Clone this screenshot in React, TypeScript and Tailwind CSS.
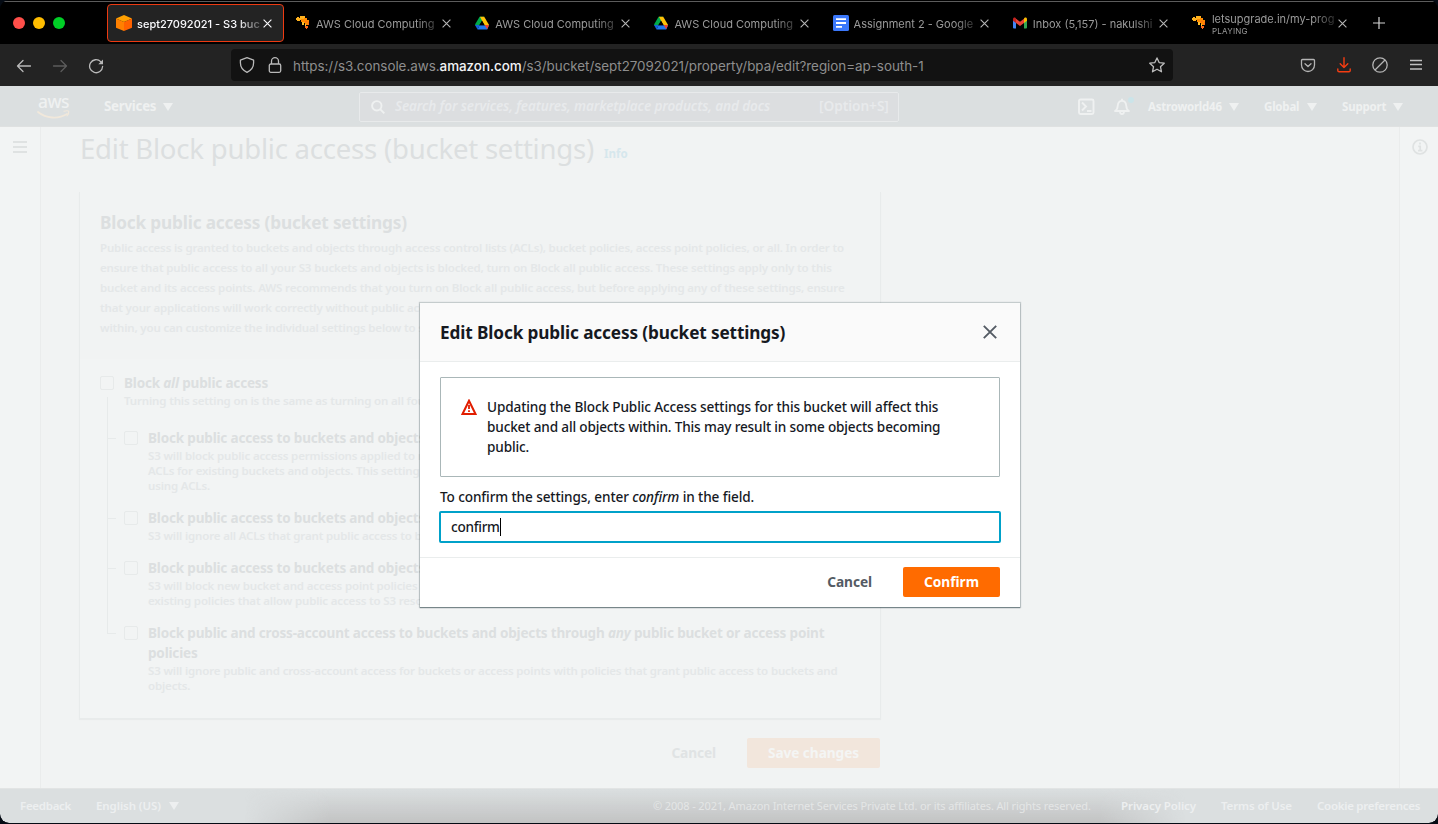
import type { ReactNode } from 'react';

const GiraffeIcon = () => (
  <svg width="16" height="16" viewBox="0 0 16 16" shapeRendering="crispEdges">
    <path fill="#ffb21e" d="M5 1h5v2H5zM1 3h9v2H1zM2 2h2v1H2zM2 5h3v1H2z" />
    <path fill="#ff8a00" d="M6 4h6v3H6zM9 3h3v2H9zM8 6h6v2H8zM12 5h2v4h-2zM10 8h3v2h-3z" />
    <path fill="#ffc02e" d="M7 7h2v3H7zM10 9h1v4h-1z" />
    <path fill="#ff6a1a" d="M13 7h1v3h-1zM10 11h3v2h-3zM10 6h2v1h-2zM11 13h1v1h-1z" />
  </svg>
);

const DriveIcon = () => (
  <svg width="16" height="16" viewBox="0 0 16 16">
    <path fill="#00a94b" d="M5.6 1.7h4.7L8.1 5.6 3.6 13 1 9.6z" />
    <path fill="#ffc107" d="M5.9 1.7h4.3l4.9 8.3h-4.6z" />
    <path fill="#1f78f0" d="M3.5 14.4l2-4.2h9.6l-1.9 4.2z" />
    <path fill="#1561d8" d="M1 10.1h4.6l-2.1 4.3z" />
    <path fill="#ea4335" d="M10.6 10.1h4.5l-1.9 4.2z" />
    <path fill="#000" d="M8 5.9l2.5 4.3h-5z" />
  </svg>
);

const DocsIcon = () => (
  <svg width="16" height="16" viewBox="0 0 16 16">
    <rect width="16" height="16" rx="1.5" fill="#3b78fb" />
    <path stroke="#fff" strokeWidth="1.8" d="M3 4.2h10M3 8h10M3 11.9h6" />
  </svg>
);

const GmailIcon = () => (
  <svg width="16" height="16" viewBox="0 0 16 16">
    <path fill="#4285f4" d="M1 5l3 2v6.5H2a1 1 0 0 1-1-1z" />
    <path fill="#34a853" d="M12 7l3-2v7.5a1 1 0 0 1-1 1h-2z" />
    <path fill="#ea4335" d="M4 3.7l4 3.1 4-3.1v4.2L8 11 4 7.9z" />
    <path fill="#c5221f" d="M1 4.2c0-1.6 1.6-2 2.6-1.2L4 3.4v4.5L1 5.7z" />
    <path fill="#fbbc04" d="M15 4.2c0-1.6-1.6-2-2.6-1.2L12 3.4v4.5l3-2.2z" />
  </svg>
);

const BucketIcon = () => (
  <svg width="16" height="16" viewBox="0 0 16 16">
    <path fill="#ffa000" d="M8 0l8 3.5-8 3.5-8-3.5z" />
    <path fill="#ff8000" d="M0 3.5L8 7v9l-8-3.2z" />
    <path fill="#ff6200" d="M16 3.5L8 7v9l8-3.2z" />
  </svg>
);

const CloseX = ({ className }: { className: string }) => (
  <svg className={className} width="9" height="9" viewBox="0 0 9 9" fill="none" stroke="currentColor" strokeWidth="1.1">
    <path d="M.6.6l7.8 7.8M8.4.6L.6 8.4" />
  </svg>
);

const tabs: { icon: ReactNode; title: string; note?: string }[] = [
  { icon: <GiraffeIcon />, title: 'AWS Cloud Computing' },
  { icon: <DriveIcon />, title: 'AWS Cloud Computing' },
  { icon: <DriveIcon />, title: 'AWS Cloud Computing' },
  { icon: <DocsIcon />, title: 'Assignment 2 - Google' },
  { icon: <GmailIcon />, title: 'Inbox (5,157) - nakulshi' },
  { icon: <GiraffeIcon />, title: 'letsupgrade.in/my-prog', note: 'PLAYING' },
];

const fade = '[mask-image:linear-gradient(to_right,black_82%,transparent_106%)]';

function TabStrip() {
  return (
    <div className="flex h-[42px] shrink-0 items-center bg-black font-['Inter',sans-serif] text-[11px]">
      <div className="flex w-[107px] shrink-0 gap-2 pl-[13px]">
        <i className="size-3 rounded-full bg-[#ff4f4a]" />
        <i className="size-3 rounded-full bg-[#ffbd00]" />
        <i className="size-3 rounded-full bg-[#00cf26]" />
      </div>
      <div className="mr-[4px] flex h-[38px] w-[177px] shrink-0 items-center rounded-[4px] border border-[#ee3a11] bg-[#232323] pl-2 text-[#fbfbfe]">
        <BucketIcon />
        <span className={`ml-[5px] w-[123px] overflow-hidden pt-[2px] whitespace-nowrap font-medium ${fade}`}>sept27092021 - S3 buc</span>
        <CloseX className="ml-[3px] shrink-0" />
      </div>
      {tabs.map((t, i) => (
        <div key={i} className="flex w-[179.2px] shrink-0 items-center pl-[7px] text-[#9a9a9a]">
          <span className="shrink-0">{t.icon}</span>
          <span className={`ml-[5px] flex w-[123px] shrink-0 flex-col overflow-hidden pt-[2px] whitespace-nowrap ${fade}`}>
            <span className={t.note ? 'leading-[13px]' : ''}>{t.title}</span>
            {t.note && <span className="text-[8px] leading-[10px] tracking-[0.25px]">{t.note}</span>}
          </span>
          <CloseX className="ml-[3px] shrink-0 text-[#b5b5b5]" />
        </div>
      ))}
      <svg className="ml-[10px]" width="12" height="12" viewBox="0 0 12 12" stroke="#d4d4d4" strokeWidth="1.2"><path d="M6 0v12M0 6h12" /></svg>
    </div>
  );
}

function Toolbar() {
  return (
    <div className="flex h-[42px] shrink-0 items-center bg-[#232323]">
      <svg className="ml-[16px] mt-px" width="16" height="16" viewBox="0 0 16 16" fill="none" stroke="#b9b9b9" strokeWidth="1.3" strokeLinecap="round" strokeLinejoin="round"><path d="M1.5 8h13M7 2.5L1.5 8 7 13.5" /></svg>
      <svg className="ml-[20px] mt-px" width="16" height="16" viewBox="0 0 16 16" fill="none" stroke="#5c5c5c" strokeWidth="1.3" strokeLinecap="round" strokeLinejoin="round"><path d="M1.5 8h13M9 2.5L14.5 8 9 13.5" /></svg>
      <svg className="ml-[20px] mt-px" width="16" height="16" viewBox="0 0 16 16" fill="none" stroke="#b9b9b9" strokeWidth="1.3" strokeLinecap="round"><path d="M14.6 8.5A6.5 6.5 0 1 1 12.7 3.6" /><path d="M15 1.5v4.7h-4.7z" fill="#b9b9b9" stroke="none" /></svg>
      <div className="ml-[127px] flex h-8 w-[942px] shrink-0 items-center rounded-[4px] bg-[#121212]">
        <svg className="ml-[8px]" width="16" height="16" viewBox="0 0 16 16" fill="none" stroke="#b9b9b9" strokeWidth="1.3" strokeLinejoin="round"><path d="M8 .7l6.600 2.500v2.600c0 4.500-2.600 7.700-6.600 9.500C4 13.500 1.400 10.300 1.400 5.800V3.200z" /></svg>
        <svg className="ml-[12px]" width="16" height="16" viewBox="0 0 16 16" fill="none" stroke="#b9b9b9" strokeWidth="1.3"><rect x="2.3" y="7" width="11.4" height="8.300" rx="1.5" /><path d="M4.500 7V4.200a3.500 3.500 0 0 1 7 0V7" /></svg>
        <div className="ml-[10px] flex-1 pt-[2px] whitespace-nowrap font-['Inter',sans-serif] text-[13.4px] tracking-[-0.02px] text-[#8e8e8e]">
          https://s3.console.aws.<span className="font-medium text-[#f3f3f5]">amazon.com</span>/s3/bucket/sept27092021/property/bpa/edit?region=ap-south-1
        </div>
        <svg className="mr-[8px]" width="16" height="16" viewBox="0 0 16 16" fill="none" stroke="#bdbdbd" strokeWidth="1.3" strokeLinejoin="round"><path d="M8 .9l2.150 4.700 5.100.6-3.800 3.450 1.050 5.150L8 12.200l-4.500 2.600 1.050-5.150L.75 6.200l5.100-.6z" /></svg>
      </div>
      <svg className="ml-[127px]" width="16" height="16" viewBox="0 0 16 16" fill="none" stroke="#b4b4b4" strokeWidth="1.3" strokeLinecap="round" strokeLinejoin="round"><path d="M2.500 2.500h11a1 1 0 0 1 1 1V8a6.500 6.500 0 0 1-13 0V3.500a1 1 0 0 1 1-1z" /><path d="M5 6.700l3 2.800 3-2.800" /></svg>
      <svg className="ml-[20px]" width="16" height="16" viewBox="0 0 16 16" fill="none" stroke="#f53d12" strokeWidth="1.4" strokeLinecap="round" strokeLinejoin="round"><path d="M8 .8v9.700M4.200 6.800L8 10.600l3.800-3.800M1.800 12v1.500a1.300 1.300 0 0 0 1.300 1.300h9.800a1.300 1.300 0 0 0 1.300-1.300V12" /></svg>
      <svg className="ml-[20px]" width="16" height="16" viewBox="0 0 16 16" fill="none" stroke="#b4b4b4" strokeWidth="1.3"><circle cx="8" cy="8" r="7.200" /><path d="M3 13L13 3" /></svg>
      <svg className="ml-[20px]" width="16" height="16" viewBox="0 0 16 16" stroke="#c0c0c0" strokeWidth="1.3"><path d="M2 3.500h12M2 7.500h12M2 12h12" /></svg>
    </div>
  );
}

const Caret = ({ className = '' }: { className?: string }) => (
  <svg className={`shrink-0 ${className}`} width="10" height="8" viewBox="0 0 10 8" fill="currentColor"><path d="M0 0h10L5 8z" /></svg>
);

function ConsoleNav() {
  return (
    <div className="flex h-[41px] shrink-0 items-center border-b border-[#dfe1e1] bg-[#dbdfe0] pt-px font-bold text-[#eff1f1]">
      <div className="ml-[37px] flex w-[33px] flex-col items-center">
        <span className="text-[17.500px] leading-[14px] font-medium tracking-[-0.5px]">aws</span>
        <svg className="mt-[2px]" width="33" height="10" viewBox="0 0 33 10" fill="none" stroke="#f1e8db" strokeWidth="1.8" strokeLinecap="round">
          <path d="M1 2c8 6.500 20 7.500 29 2" /><path d="M27 1.200c2-.7 4.500-.6 4.700.2.200 1-.5 3.200-1.700 4.500" strokeWidth="1.2" />
        </svg>
      </div>
      <span className="ml-[34px] w-[58px] text-[13.3px] tracking-[-0.25px]">Services</span>
      <Caret className="ml-px" />
      <div className="ml-[186px] flex h-[30px] w-[540px] shrink-0 items-center rounded-[2px] border border-[#e8eaeb] bg-[#dcdee0]">
        <svg className="ml-[11px]" width="14" height="14" viewBox="0 0 14 14" fill="none" stroke="currentColor" strokeWidth="1.9"><circle cx="5.8" cy="5.8" r="4.7" /><path d="M9.300 9.300l4 4" /></svg>
        <span className="ml-[10px] w-[424px] whitespace-nowrap text-[13.5px] font-semibold tracking-[-0.11px] text-[#e8eaec] italic">Search for services, features, marketplace products, and docs</span>
        <span className="text-[13.7px] font-semibold tracking-[-0.05px] text-[#e8eaec]">[Option+S]</span>
      </div>
      <svg className="ml-[178px]" width="18" height="18" viewBox="0 0 18 18" fill="none" stroke="currentColor" strokeWidth="1.9"><rect x="2" y="1.500" width="14.500" height="14.500" rx="1.500" /><path d="M5 4.500l4 4-4 4M10 13h4.500" /></svg>
      <span className="relative ml-[18px] h-[18px] w-[18px]">
        <svg width="18" height="18" viewBox="0 0 18 18" fill="none" stroke="currentColor" strokeWidth="1.800" strokeLinejoin="round"><path d="M2 13c2-1 2.600-3 2.800-5.500C5 4.800 6.500 2.800 9 2.800s4 2 4.200 4.700C13.400 10 14 12 16 13zM9 .8v2M7 13.500c0 3.300 4 3.300 4 0" /></svg>
        <i className="absolute top-[-1px] left-[15px] size-[6px] rounded-full bg-[#cbe4e9]" />
      </span>
      <span className="ml-[17px] w-[81px] text-[11.5px] tracking-[-0.24px]">Astroworld46</span><Caret />
      <span className="ml-[25px] w-[43px] text-[11.5px] tracking-[-0.2px]">Global</span><Caret />
      <span className="ml-[25px] w-[51px] text-[11.5px] tracking-[-0.2px]">Support</span><Caret />
    </div>
  );
}

const Box = () => <i className="mt-[3px] mr-[10px] size-[14px] shrink-0 rounded-[2px] border border-[#e7eaea]" />;

const settings: { title: ReactNode; lines: string[] }[] = [
  {
    title: <>Block public access to buckets and objects granted through <em>new</em> access control lists (ACLs)</>,
    lines: [
      'S3 will block public access permissions applied to newly added buckets or objects, and prevent the creation of new public access',
      'ACLs for existing buckets and objects. This setting doesn’t change any existing permissions that allow public access to S3',
      'using ACLs.',
    ],
  },
  {
    title: <>Block public access to buckets and objects granted through <em>any</em> access control lists (ACLs)</>,
    lines: ['S3 will ignore all ACLs that grant public access to buckets and objects.'],
  },
  {
    title: <>Block public access to buckets and objects granted through <em>new</em> public bucket policies</>,
    lines: [
      'S3 will block new bucket and access point policies that grant public access to buckets and objects. This doesn’t change any',
      'existing policies that allow public access to S3 resources.',
    ],
  },
  {
    title: <>Block public and cross-account access to buckets and objects through <em>any</em> public bucket or access point<br />policies</>,
    lines: [
      'S3 will ignore public and cross-account access for buckets or access points with policies that grant public access to buckets and',
      'objects.',
    ],
  },
];

const boldLine = 'text-[13.5px] leading-5 font-bold tracking-[-0.165px] text-[#dcdfe0]';
const smallLine = 'text-[11.5px] leading-[15px] font-semibold tracking-[-0.16px] text-[#e4e7e8]';

function SettingsPage() {
  return (
    <div className="flex flex-1 bg-[#f1f3f3] text-[#dcdfe0]">
      <div className="w-[41px] shrink-0 border-r border-[#eaecec] bg-[#f2f4f4]">
        <svg className="mt-[13px] ml-[13px]" width="14" height="14" viewBox="0 0 14 14" stroke="#dfe2e2" strokeWidth="1.8"><path d="M0 2h14M0 7h14M0 12h14" /></svg>
      </div>
      <div className="flex-1 pl-[38px]">
        <div className="flex h-[65px] items-start pl-px whitespace-nowrap">
          <h1 className="mt-[4px] w-[524px] text-[27.500px] leading-9 tracking-[-0.21px]">Edit Block public access (bucket settings)</h1>
          <span className="mt-[19px] text-[11.5px] leading-4 font-bold text-[#d6e7ed]">Info</span>
        </div>
        <section className="w-[802px] border border-t-0 border-[#e8ebeb] bg-[#f2f4f4] whitespace-nowrap shadow-[0_1px_1px_#e9ebeb]">
          <header className="h-[167px] bg-[#f1f3f3] pt-[17px] pl-[20px]">
            <h2 className="mb-px text-[17.2px] leading-7 font-bold tracking-[-0.16px]">Block public access (bucket settings)</h2>
            <div className="text-[11.5px] leading-5 font-semibold tracking-[-0.16px] text-[#e4e7e8]">
              <p>Public access is granted to buckets and objects through access control lists (ACLs), bucket policies, access point policies, or all. In order to</p>
              <p className="tracking-[-0.14px]">ensure that public access to all your S3 buckets and objects is blocked, turn on Block all public access. These settings apply only to this</p>
              <p>bucket and its access points. AWS recommends that you turn on Block all public access, but before applying any of these settings, ensure</p>
              <p>that your applications will work correctly without public access. If you require some level of public access to your buckets or objects</p>
              <p>within, you can customize the individual settings below to suit your specific storage use cases. Learn more</p>
            </div>
          </header>
          <div className="relative h-[359px] pt-[14px] pl-[20px]">
            <i className="absolute top-[38px] left-[27px] h-[236px] w-px bg-[#e7eaea]" />
            <div className="mb-5 flex">
              <Box />
              <div>
                <div className={boldLine}>Block <em>all</em> public access</div>
                <div className={smallLine}>Turning this setting on is the same as turning on all four settings below. Each of the following settings are independent of one another.</div>
              </div>
            </div>
            {settings.map((s, i) => (
              <div key={i} className="mb-[15px] flex pl-[7px]">
                <i className="mt-[10px] mr-[8px] h-px w-[9px] bg-[#e7eaea]" />
                <Box />
                <div>
                  <div className={boldLine}>{s.title}</div>
                  {s.lines.map((l) => <div key={l} className={smallLine}>{l}</div>)}
                </div>
              </div>
            ))}
          </div>
        </section>
        <div className="mt-[19px] flex h-[30px] w-[801px] items-center justify-end text-[13.7px] font-bold text-[#e0e3e4]">
          <span className="mr-[31px] tracking-[-0.1px]">Cancel</span>
          <span className="flex h-full w-[133px] items-center justify-center rounded-[2px] bg-[#f2e6dc] tracking-[-0.08px] text-[#f4f5f4]">Save changes</span>
        </div>
      </div>
      <div className="w-[39px] shrink-0 border-l border-[#eaecec] bg-[#f2f4f4]">
        <svg className="mt-[12px] ml-[12px]" width="16" height="16" viewBox="0 0 16 16" fill="none" stroke="#dfe2e2" strokeWidth="1.7"><circle cx="8" cy="8" r="7" /><path d="M8 3.600v2M6.300 7.400H8.200v4M6 11.600h4.400" /></svg>
      </div>
    </div>
  );
}

function Footer() {
  return (
    <footer className="relative flex h-[35px] shrink-0 items-center rounded-b-[9px] border-t border-[#e2e4e4] bg-[#dbdfe0] text-[11.5px] font-semibold whitespace-nowrap text-[#edeff0]">
      <div className="absolute inset-y-0 left-[245px] w-[940px] bg-linear-to-b from-transparent to-[#c2c3c3] [mask-image:linear-gradient(to_right,transparent,black_9%,black_91%,transparent)]" />
      <span className="relative ml-[20px] w-[76px] tracking-[-0.28px]">Feedback</span>
      <span className="relative w-[73px] tracking-[-0.08px]">English (US)</span>
      <Caret className="relative" />
      <span className="relative ml-[474px] w-[468px] text-[11px] font-normal tracking-[-0.12px] text-[#e4e6e6]">© 2008 - 2021, Amazon Internet Services Private Ltd. or its affiliates. All rights reserved.</span>
      <span className="relative w-[100px] tracking-[-0.08px]">Privacy Policy</span>
      <span className="relative w-[96px] tracking-[-0.13px]">Terms of Use</span>
      <span className="relative tracking-[-0.27px]">Cookie preferences</span>
    </footer>
  );
}

function ConfirmDialog() {
  return (
    <div role="dialog" className="absolute top-[303px] left-[420px] flex h-[304px] w-[600px] flex-col bg-white whitespace-nowrap text-[#16191f] shadow-[0_1px_1px_0_rgba(0,28,36,0.4),0_0_1px_1px_rgba(0,28,36,0.18)]">
      <header className="flex h-[59px] items-center justify-between border-b border-[#eaeded] bg-[#fafafa] pr-[23px] pl-[20px]">
        <h2 className="pt-[2px] text-[17.2px] leading-[22px] font-bold tracking-[-0.12px]">Edit Block public access (bucket settings)</h2>
        <svg width="14" height="14" viewBox="0 0 14 14" stroke="#545b64" strokeWidth="1.9"><path d="M.8.8l12.400 12.400M13.200.8L.8 13.200" /></svg>
      </header>
      <div className="flex h-[195px] flex-col px-[20px] pt-[15px] text-[13.6px] leading-5 font-medium">
        <div className="flex h-[100px] rounded-[1px] border border-[#aab7b8] pt-[19px] pl-[20px]">
          <svg className="mt-[2px] mr-[10px]" width="16" height="16" viewBox="0 0 16 16" fill="none" stroke="#e11d00" strokeWidth="2"><path d="M8 1.700L14.500 15h-13z" /><path d="M8 6v4M8 11.300v1.700" strokeWidth="1.800" /></svg>
          <div>
            <p className="tracking-[-0.13px]">Updating the Block Public Access settings for this bucket will affect this</p>
            <p className="tracking-[-0.16px]">bucket and all objects within. This may result in some objects becoming</p>
            <p className="tracking-[-0.13px]">public.</p>
          </div>
        </div>
        <label className="mt-[10px] tracking-[-0.11px]">To confirm the settings, enter <em>confirm</em> in the field.</label>
        <div className="-mx-px mt-[4px] flex h-8 shrink-0 items-center rounded-[2px] border-2 border-[#00a1c9] pl-[10px]">
          <span className="tracking-[-0.28px]">confirm</span>
          <i className="h-[18px] w-px bg-black" />
        </div>
      </div>
      <footer className="flex h-[50px] items-center justify-end border-t border-[#eaeded] pr-[20px] pb-px text-[13.7px] font-bold">
        <span className="mr-[31px] pt-px tracking-[-0.08px] text-[#545b64]">Cancel</span>
        <button className="h-[30px] w-[97px] rounded-[2px] bg-[#ff6b00] tracking-[-0.02px] text-white">Confirm</button>
      </footer>
    </div>
  );
}

export default function App() {
  return (
    <div className="relative flex h-[824px] w-[1438px] flex-col overflow-hidden bg-[#050b14] font-['Noto_Sans',sans-serif]">
      <div className="flex h-[823px] flex-col overflow-hidden rounded-[9px]">
        <div className="h-[2px] shrink-0 border-b border-[#5c5c5c] bg-black" />
        <TabStrip />
        <Toolbar />
        <ConsoleNav />
        <SettingsPage />
        <Footer />
      </div>
      <ConfirmDialog />
    </div>
  );
}
